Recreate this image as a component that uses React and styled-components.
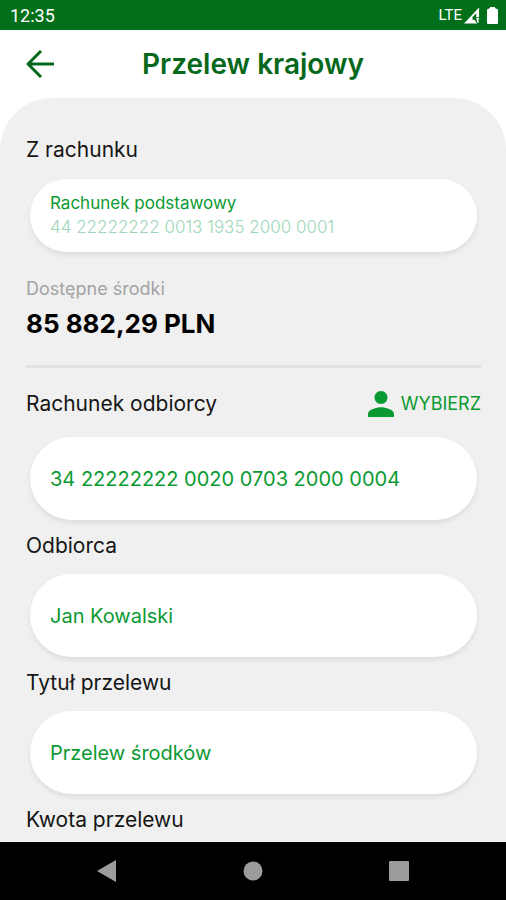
import React from 'react';
import styled, { createGlobalStyle } from 'styled-components';

const theme = {
  bar: '#02701a',
  title: '#05681a',
  green: '#0b9a32',
  mint: '#9ed6b7',
  panel: '#f0f0f0',
  line: '#e2e2e2',
  muted: '#a3a3a3',
  text: '#161616',
  nav: '#9c9c9c',
};

const App = () => (
  <Page>
    <GlobalStyle />
    <StatusBar>
      <span>12:35</span>
      <StatusIcons>
        <Network>LTE</Network>
        <svg width="16" height="17" viewBox="0 0 17 17" aria-hidden="true">
          <path
            fillRule="evenodd"
            d="M16 0v10h-3V6l-4 4v3h2l3 4H0zM13 11h3v2h-1l1 3h-2z"
            fill="#fff"
          />
        </svg>
        <svg width="11" height="17" viewBox="0 0 11 17" aria-hidden="true">
          <path
            d="M3 0h5v1l2 1q1 0 1 1v13q0 1-1 1H1q-1 0-1-1V3q0-1 1-1l2-1z"
            fill="#fff"
          />
        </svg>
      </StatusIcons>
    </StatusBar>

    <Header>
      <Back type="button" aria-label="Wstecz">
        <svg width="28" height="28" viewBox="0 0 28 28" aria-hidden="true">
          <path
            d="M15 1 2 14l13 13M2 14h26"
            fill="none"
            stroke={theme.title}
            strokeWidth="3"
          />
        </svg>
      </Back>
      <Title>Przelew krajowy</Title>
    </Header>

    <Panel>
      <Heading>Z rachunku</Heading>
      <Account type="button">
        <AccountName>Rachunek podstawowy</AccountName>
        <AccountNumber>44 22222222 0013 1935 2000 0001</AccountNumber>
      </Account>

      <Caption>Dostępne środki</Caption>
      <Amount>85 882,29 PLN</Amount>
      <Divider />

      <Row>
        <Label htmlFor="account">Rachunek odbiorcy</Label>
        <Choose type="button">
          <svg width="26" height="26" viewBox="4 4 16 16" aria-hidden="true">
            <path
              d="M12 12c2.21 0 4-1.79 4-4s-1.79-4-4-4-4 1.79-4 4 1.79 4 4 4zm0 2c-2.67 0-8 1.34-8 4v2h16v-2c0-2.66-5.33-4-8-4z"
              fill={theme.green}
            />
          </svg>
          WYBIERZ
        </Choose>
      </Row>
      <Input id="account" defaultValue="34 22222222 0020 0703 2000 0004" />

      <Label htmlFor="recipient">Odbiorca</Label>
      <Input id="recipient" defaultValue="Jan Kowalski" />

      <Label htmlFor="subject">Tytuł przelewu</Label>
      <Input id="subject" defaultValue="Przelew środków" />

      <Heading>Kwota przelewu</Heading>
    </Panel>

    <NavBar>
      <NavButton type="button" aria-label="Wróć">
        <svg width="20" height="22" viewBox="0 0 20 22" aria-hidden="true">
          <path d="M19 0v22L0 11z" fill={theme.nav} />
        </svg>
      </NavButton>
      <NavButton type="button" aria-label="Ekran główny">
        <svg width="20" height="20" viewBox="0 0 20 20" aria-hidden="true">
          <circle cx="10" cy="10" r="9.5" fill={theme.nav} />
        </svg>
      </NavButton>
      <NavButton type="button" aria-label="Ostatnie">
        <svg width="20" height="20" viewBox="0 0 20 20" aria-hidden="true">
          <rect width="20" height="20" rx="1" fill={theme.nav} />
        </svg>
      </NavButton>
    </NavBar>
  </Page>
);

export default App;

const GlobalStyle = createGlobalStyle`
  * {
    box-sizing: border-box;
  }

  body {
    margin: 0;
    background: #fff;
    font-family: Inter, "Open Sans", sans-serif;
    color: ${theme.text};
  }

  button,
  input {
    font: inherit;
    border: 0;
    padding: 0;
    background: none;
  }

  button {
    cursor: pointer;
  }

  svg {
    display: block;
    flex: none;
  }
`;

const Page = styled.div`
  display: flex;
  flex-direction: column;
  min-height: 100vh;
`;

const StatusBar = styled.div`
  display: flex;
  align-items: center;
  justify-content: space-between;
  height: 30px;
  padding: 0 8px 0 10px;
  background: ${theme.bar};
  color: #fff;
  font-family: Roboto, sans-serif;
  font-size: 18px;
`;

const StatusIcons = styled.div`
  display: flex;
  align-items: center;
  gap: 7px;
`;

const Network = styled.span`
  font-size: 15px;
  margin-right: -5px;
`;

const Header = styled.header`
  display: grid;
  grid-template-columns: 28px 1fr 28px;
  align-items: center;
  height: 68px;
  padding: 0 26px;
`;

const Back = styled.button`
  display: block;
`;

const Title = styled.h1`
  margin: 0;
  color: ${theme.title};
  font-size: 28px;
  font-weight: 600;
  line-height: 40px;
  text-align: center;
  white-space: nowrap;
`;

const Panel = styled.main`
  flex: 1;
  padding: 37px 25px 7px 26px;
  background: ${theme.panel};
  border-radius: 52px 52px 0 0;
`;

const Heading = styled.div`
  font-size: 21px;
  line-height: 30px;
`;

const Label = styled.label`
  display: block;
  font-size: 21px;
  line-height: 30px;
`;

const Account = styled.button`
  display: flex;
  flex-direction: column;
  justify-content: center;
  width: calc(100% - 8px);
  height: 73px;
  margin: 14px 4px 24px;
  padding: 0 20px 2px;
  border-radius: 37px;
  background: #fff;
  box-shadow: 0 3px 5px rgba(0, 0, 0, 0.08);
  text-align: left;
  line-height: 24px;
`;

const AccountName = styled.span`
  color: ${theme.green};
  font-size: 17px;
`;

const AccountNumber = styled.span`
  color: ${theme.mint};
  font-size: 17px;
  font-weight: 300;
`;

const Caption = styled.div`
  color: ${theme.muted};
  font-size: 18px;
  line-height: 26px;
`;

const Amount = styled.div`
  color: #000;
  font-size: 26px;
  font-weight: 700;
  line-height: 44px;
`;

const Divider = styled.hr`
  height: 3px;
  margin: 19px 0 21px;
  border: 0;
  background: ${theme.line};
`;

const Row = styled.div`
  display: flex;
  align-items: center;
  justify-content: space-between;
`;

const Choose = styled.button`
  display: flex;
  align-items: center;
  gap: 7px;
  color: ${theme.green};
  font-size: 18px;
  line-height: 30px;
`;

const Input = styled.input`
  display: block;
  width: calc(100% - 8px);
  height: 83px;
  margin: 13px 4px 11px;
  padding: 0 20px;
  border-radius: 42px;
  background: #fff;
  box-shadow: 0 3px 5px rgba(0, 0, 0, 0.08);
  color: ${theme.green};
  font-size: 20px;

  ${Row} + & {
    margin-top: 18px;
  }

  &:focus {
    outline: 0;
    box-shadow: 0 0 0 2px rgba(11, 154, 50, 0.3);
  }
`;

const NavBar = styled.nav`
  display: flex;
  align-items: center;
  justify-content: space-around;
  height: 58px;
  padding: 0 34px;
  background: #000;
`;

const NavButton = styled.button`
  display: block;
`;
